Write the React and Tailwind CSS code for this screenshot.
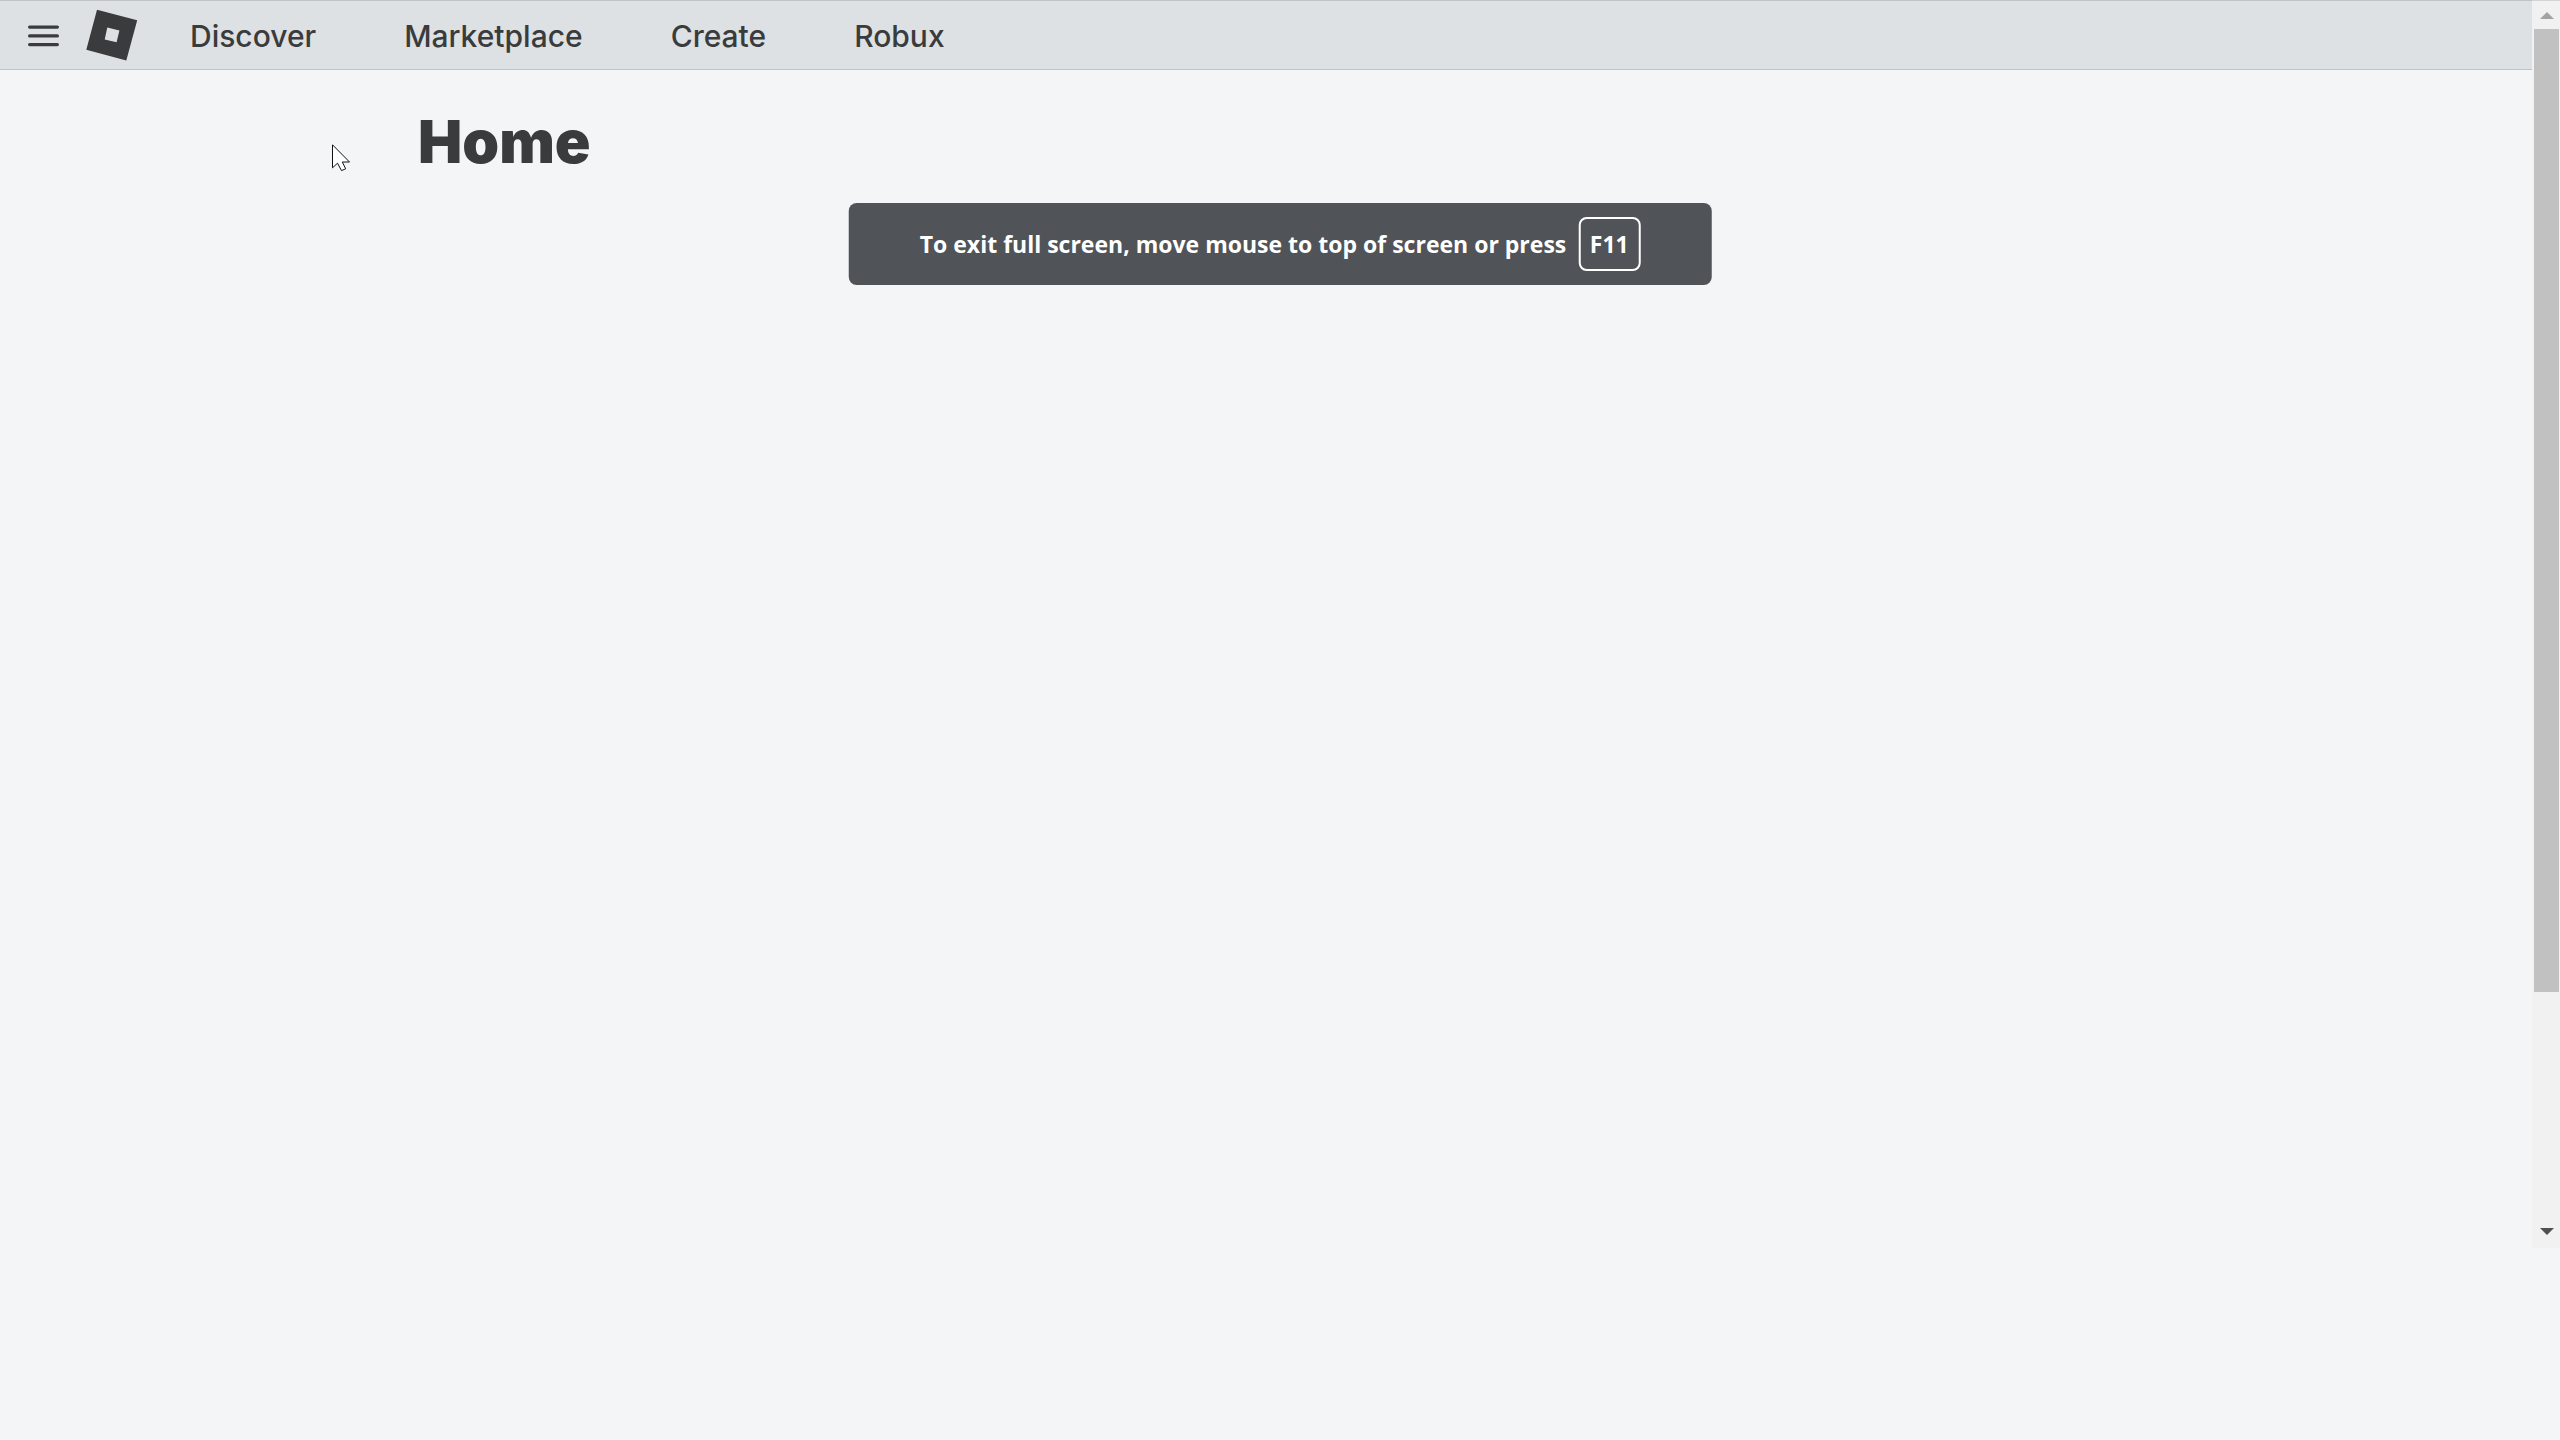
const links = ["Discover", "Marketplace", "Create", "Robux"];

function MenuIcon() {
  return (
    <svg viewBox="0 0 32 22" className="h-[22px] w-8" fill="#393b3d" aria-hidden="true">
      <rect x="0" y="0.5" width="31" height="3.2" rx="1.6" />
      <rect x="0" y="9.3" width="31" height="3.2" rx="1.6" />
      <rect x="0" y="18" width="31" height="3.2" rx="1.6" />
    </svg>
  );
}

function Logo() {
  return (
    <svg viewBox="0 0 52 52" className="size-[52px]" aria-hidden="true">
      <path
        fill="#393b3d"
        fillRule="evenodd"
        d="M11 .8 51.2 11.2 40.3 51.6.3 40.8ZM21.3 18.6 18.7 30.6 30.6 33.3 33.4 21.4Z"
      />
    </svg>
  );
}

function Header() {
  return (
    <header className="flex h-[70px] items-center border-y border-[#bfc3c6] bg-[#dee1e3] pl-7">
      <button type="button" aria-label="Open menu" className="mr-[26px] pt-0.5">
        <MenuIcon />
      </button>
      <a href="#home" aria-label="Home">
        <Logo />
      </a>
      <nav className="ml-[52px] flex items-center gap-[88px] pt-0.5 text-[30px] leading-8 font-medium text-[#393b3d]">
        {links.map((label) => (
          <a key={label} href={"#" + label.toLowerCase()}>
            {label}
          </a>
        ))}
      </nav>
    </header>
  );
}

function ScrollBar() {
  return (
    <div className="flex h-[1248px] w-7 shrink-0 flex-col items-stretch border-t border-[#d4d4d4] bg-[#f1f1f1] pl-0.5">
      <button type="button" aria-label="Scroll up" className="flex h-7 shrink-0 items-center justify-center">
        <svg viewBox="0 0 14 7" className="h-[7px] w-3.5" fill="#a3a3a3" aria-hidden="true">
          <path d="M0 7 7 0l7 7Z" />
        </svg>
      </button>
      <div className="flex flex-1 flex-col pr-px">
        <div className="grow-[13] bg-[#c1c1c1]" />
        <div className="grow-[3]" />
      </div>
      <button type="button" aria-label="Scroll down" className="flex h-[34px] shrink-0 items-center justify-center">
        <svg viewBox="0 0 14 7" className="h-[7px] w-3.5" fill="#505050" aria-hidden="true">
          <path d="M0 0h14L7 7Z" />
        </svg>
      </button>
    </div>
  );
}

function FullScreenNotice() {
  return (
    <div
      role="status"
      className="absolute top-[203px] left-1/2 flex h-[82px] -translate-x-1/2 items-center gap-3 rounded-lg bg-[#505357] px-[71px] font-['Open_Sans','Noto_Sans',sans-serif] text-[23px] leading-8 font-bold whitespace-nowrap text-white"
    >
      <span>To exit full screen, move mouse to top of screen or press</span>
      <kbd className="flex h-[54px] w-[62px] items-center justify-center rounded-lg border-2 border-white font-['Open_Sans','Noto_Sans',sans-serif]">
        F11
      </kbd>
    </div>
  );
}

function Cursor() {
  return (
    <svg
      viewBox="0 0 19 28"
      className="pointer-events-none absolute top-36 left-[332px] h-7 w-[19px]"
      fill="#ffffff"
      stroke="#111111"
      aria-hidden="true"
    >
      <path d="M.5.8v23l5-4.6 4 7.4 4.2-1.8-3.4-6.8h7.2Z" />
    </svg>
  );
}

export default function App() {
  return (
    <div className="relative flex min-h-screen items-start bg-[#f3f5f7] font-[Inter,sans-serif]">
      <div className="min-w-0 flex-1">
        <Header />
        <main className="px-[418px] pt-10">
          <h1 className="text-[59px] leading-[64px] font-black text-[#393b3d]">Home</h1>
        </main>
      </div>
      <ScrollBar />
      <FullScreenNotice />
      <Cursor />
    </div>
  );
}
